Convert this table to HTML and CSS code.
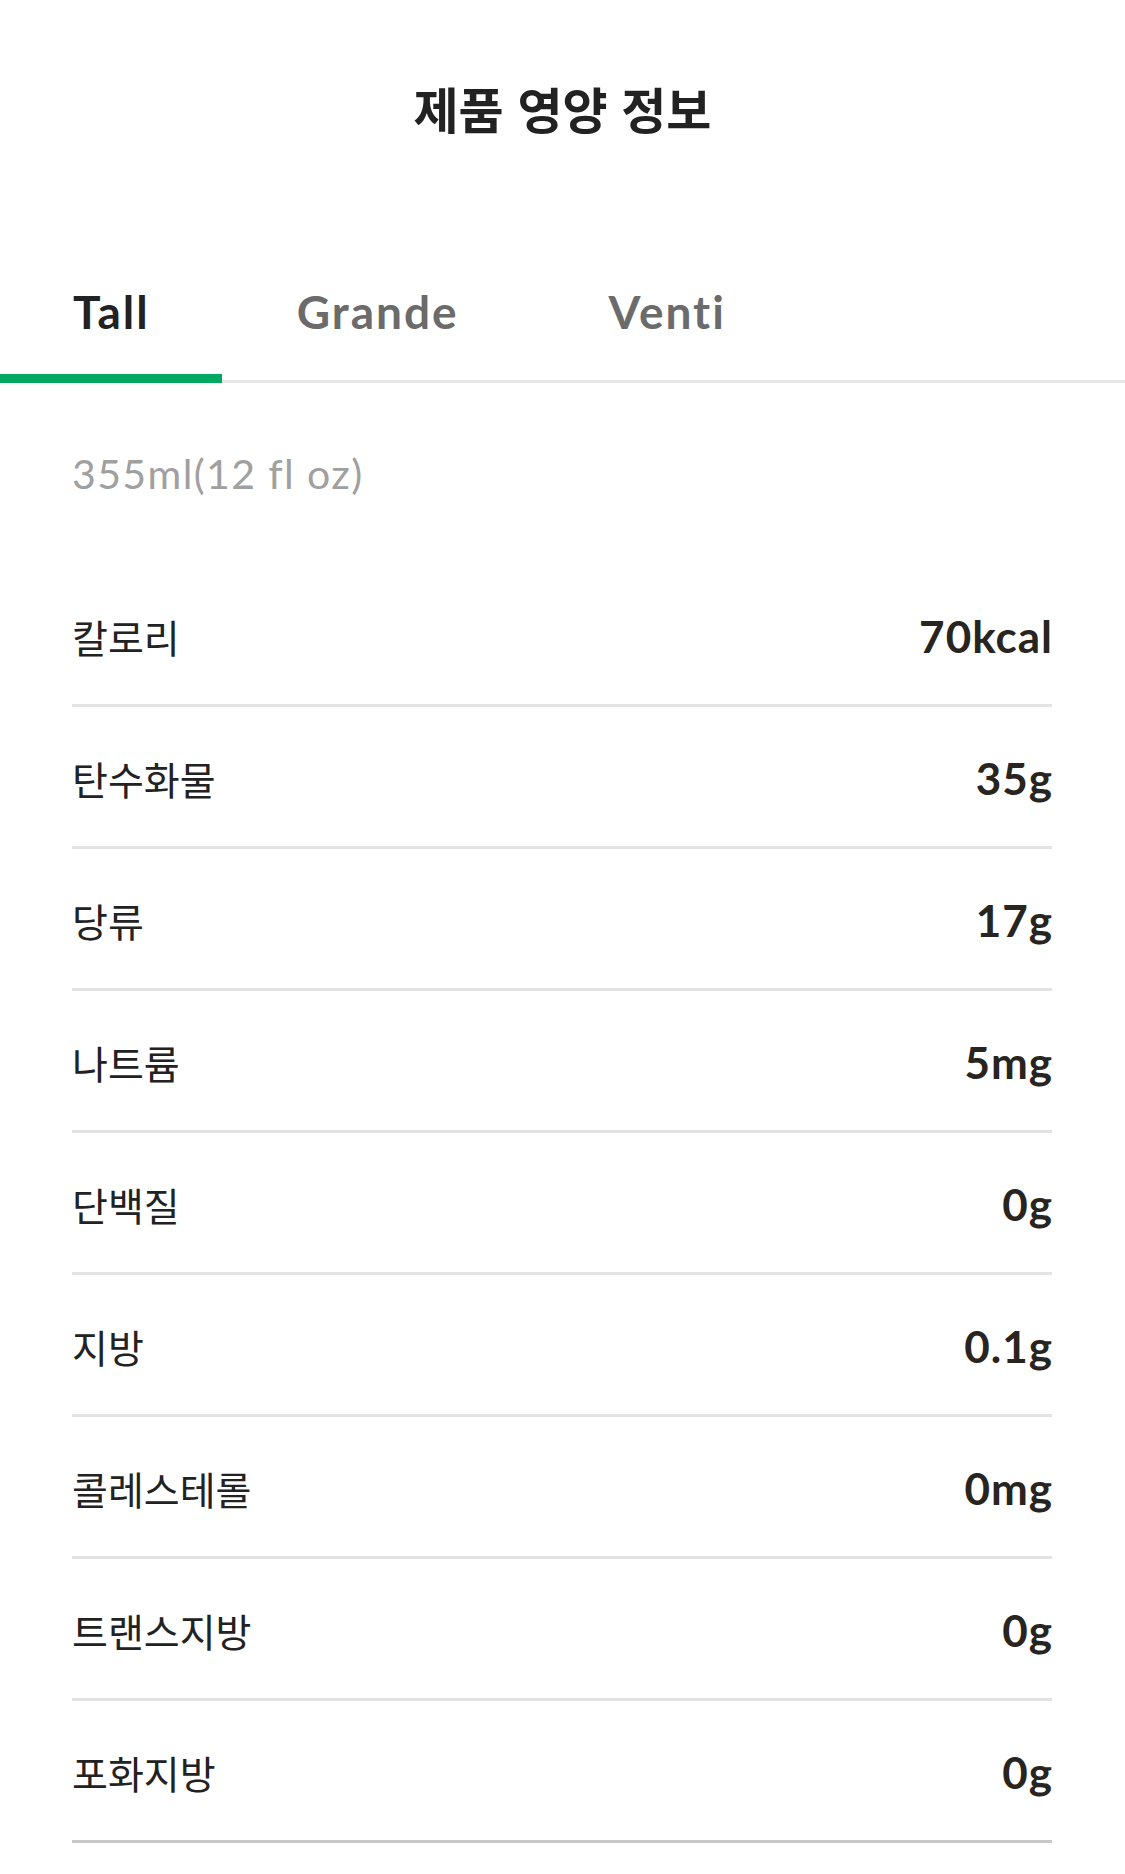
FILE: index.html
```html
<!DOCTYPE html>
<html lang="ko">
<head>
    <meta charset="UTF-8">
    <meta name="viewport" content="width=device-width, initial-scale=1.0">
    <title>제품 영양 정보</title>
    <link rel="stylesheet" href="styles.css">
</head>
<body>

<div id="page">
    <!-- Header -->
    <h1 class="title">제품 영양 정보</h1>

    <!-- Size tabs -->
    <div class="tabs">
        <div class="tab active">Tall</div>
        <div class="tab">Grande</div>
        <div class="tab">Venti</div>
    </div>

    <div class="content">
        <p class="size">355ml(12 fl oz)</p>

        <ul class="nutrition">
            <li><span class="label">칼로리</span><span class="value">70kcal</span></li>
            <li><span class="label">탄수화물</span><span class="value">35g</span></li>
            <li><span class="label">당류</span><span class="value">17g</span></li>
            <li><span class="label">나트륨</span><span class="value">5mg</span></li>
            <li><span class="label">단백질</span><span class="value">0g</span></li>
            <li><span class="label">지방</span><span class="value">0.1g</span></li>
            <li><span class="label">콜레스테롤</span><span class="value">0mg</span></li>
            <li><span class="label">트랜스지방</span><span class="value">0g</span></li>
            <li><span class="label">포화지방</span><span class="value">0g</span></li>
        </ul>
    </div>
</div>

</body>
</html>
```

FILE: styles.css
```css
body {
    font-family: Lato, "Noto Sans CJK KR", sans-serif;
    margin: 0;
    padding: 0;
    background-color: #fff;
    color: #222;
}
#page {
    display: flex;
    flex-direction: column;
}
.title {
    margin: 0;
    padding-top: 78px;
    font-family: "Noto Sans CJK KR", sans-serif;
    font-size: 49px;
    font-weight: 700;
    line-height: 60px;
    text-align: center;
    color: #222;
}
.tabs {
    display: flex;
    margin-top: 119px;
    border-bottom: 3px solid #e6e6e6;
}
.tab {
    padding: 25px 75px 32px;
    font-size: 46px;
    font-weight: 700;
    line-height: 60px;
    letter-spacing: 2px;
    font-variant-ligatures: none;
    color: #6b6b6b;
    border-bottom: 9px solid transparent;
    margin-bottom: -3px;
}
.tab:first-child {
    padding-left: 73px;
    padding-right: 72px;
}
.tab.active {
    color: #222;
    border-bottom-color: #00a862;
}
.content {
    padding: 0 73px 0 72px;
}
.size {
    margin: 66px 0 0;
    font-size: 41px;
    line-height: 50px;
    letter-spacing: 1.4px;
    color: #a0a0a0;
}
.nutrition {
    list-style: none;
    margin: 66px 0 0;
    padding: 0;
}
.nutrition li {
    display: flex;
    justify-content: space-between;
    align-items: center;
    box-sizing: border-box;
    height: 142px;
    padding-top: 2px;
    border-bottom: 3px solid #e3e3e3;
}
.nutrition li:last-child {
    border-bottom-color: #c8c8c8;
}
.label {
    font-family: "Noto Sans CJK KR", sans-serif;
    font-size: 39px;
    line-height: 50px;
    color: #222;
}
.value {
    font-size: 44px;
    font-weight: 700;
    line-height: 54px;
    letter-spacing: 1px;
    margin-right: -1px;
    color: #282420;
}
```
